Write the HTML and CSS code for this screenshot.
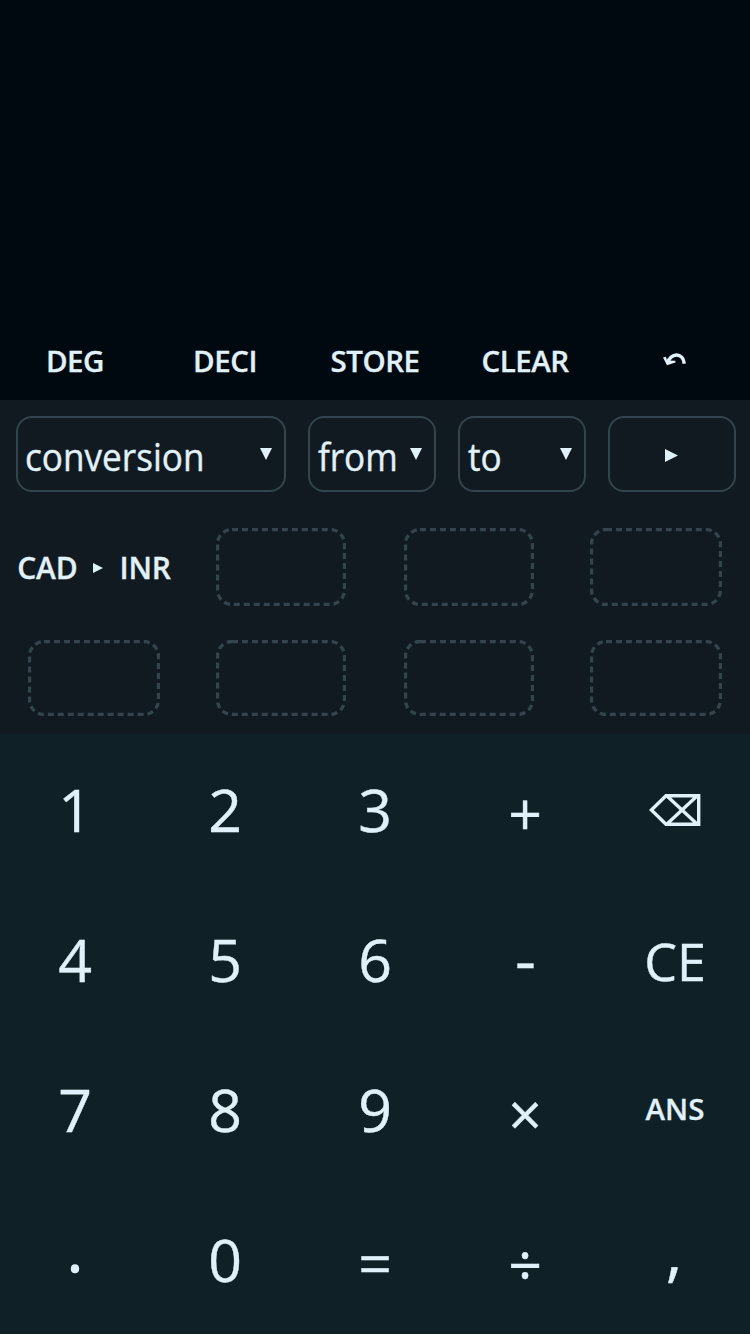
FILE: index.html
```
<!DOCTYPE html>
<html lang="en">
<head>
<meta charset="utf-8">
<title>Calculator</title>
<link rel="stylesheet" href="styles.css">
</head>
<body>
<main class="calculator">
  <section class="display"></section>
  <nav class="tools">
    <button class="tool">DEG</button>
    <button class="tool">DECI</button>
    <button class="tool">STORE</button>
    <button class="tool">CLEAR</button>
    <button class="tool" aria-label="Undo"><svg class="undo" width="24" height="14" viewBox="0 0 24 14"><path d="M5 9.5C6.5.3 20.8-1.6 21 10.8" fill="none" stroke="currentColor" stroke-width="3.4"/><path d="M0 4.6l2.8-.8 1.4 3.8 8.2.2v1.6L4 12.2z" fill="currentColor"/></svg></button>
  </nav>
  <section class="panel">
    <div class="selectors">
      <button class="select"><span class="select-label">conversion</span><svg class="caret" width="12" height="12" viewBox="0 0 12 12"><path d="M0 0h12L6 12z" fill="currentColor"/></svg></button>
      <button class="select"><span class="select-label short">from</span><svg class="caret" width="12" height="12" viewBox="0 0 12 12"><path d="M0 0h12L6 12z" fill="currentColor"/></svg></button>
      <button class="select"><span class="select-label short">to</span><svg class="caret" width="12" height="12" viewBox="0 0 12 12"><path d="M0 0h12L6 12z" fill="currentColor"/></svg></button>
      <button class="select go" aria-label="Convert"><svg width="13" height="13" viewBox="0 0 13 13"><path d="M0 0l13 6.5L0 13z" fill="currentColor"/></svg></button>
    </div>
    <div class="slots">
      <button class="saved"><span>CAD</span><svg class="arrow" width="10" height="10" viewBox="0 0 10 10"><path d="M0 0l10 5-10 5z" fill="currentColor"/></svg><span>INR</span></button>
      <svg class="slot" width="130" height="78"><rect x="1.5" y="1.5" width="127" height="75" rx="14.5"/></svg>
      <svg class="slot" width="130" height="78"><rect x="1.5" y="1.5" width="127" height="75" rx="14.5"/></svg>
      <svg class="slot" width="132" height="78"><rect x="1.5" y="1.5" width="129" height="75" rx="14.5"/></svg>
      <svg class="slot" width="132" height="76"><rect x="1.5" y="1.5" width="129" height="73" rx="14.5"/></svg>
      <svg class="slot" width="130" height="76"><rect x="1.5" y="1.5" width="127" height="73" rx="14.5"/></svg>
      <svg class="slot" width="130" height="76"><rect x="1.5" y="1.5" width="127" height="73" rx="14.5"/></svg>
      <svg class="slot" width="132" height="76"><rect x="1.5" y="1.5" width="129" height="73" rx="14.5"/></svg>
    </div>
  </section>
  <section class="keypad">
    <button class="key">1</button><button class="key">2</button><button class="key">3</button><button class="key op">+</button>
    <button class="key erase" aria-label="Backspace"><svg width="52" height="32" viewBox="0 0 52 32"><path d="M2.4 16L17 1.7h32.7v28.6H17zM18 2l30 28M18 30L48 2" fill="none" stroke="currentColor" stroke-width="3.4"/></svg></button>
    <button class="key">4</button><button class="key">5</button><button class="key">6</button><button class="key minus"><span>-</span></button><button class="key ce">CE</button>
    <button class="key">7</button><button class="key">8</button><button class="key">9</button><button class="key op">×</button><button class="key ans">ANS</button>
    <button class="key dot">.</button><button class="key">0</button><button class="key equals">=</button><button class="key op">÷</button><button class="key comma">,</button>
  </section>
</main>
</body>
</html>
```
FILE: styles.css
```
* { box-sizing: border-box; }
body {
  margin: 0;
  background: #000910;
  color: #e1f1f9;
  font-family: "Open Sans", "Noto Sans", sans-serif;
}
button {
  margin: 0;
  padding: 0;
  border: 0;
  background: none;
  color: inherit;
  font: inherit;
}
svg { display: block; flex: none; }
.calculator {
  display: grid;
  grid-template-rows: 324px 76px 334px 600px;
  width: 750px;
  height: 1334px;
  overflow: hidden;
}
.tools { display: grid; grid-template-columns: repeat(5, 150px); }
.tool {
  display: flex;
  align-items: center;
  justify-content: center;
  padding-bottom: 4px;
  font-size: 29.5px;
  font-weight: 600;
  letter-spacing: -0.5px;
  -webkit-text-stroke: 0.3px;
}
.undo { margin: 0 1px 1px 0; }
.panel { background: #121a21; padding: 16px 14px 0 16px; }
.selectors {
  display: grid;
  grid-template-columns: 270px 128px 128px 128px;
  column-gap: 22px;
  height: 76px;
}
.select {
  display: flex;
  align-items: center;
  justify-content: space-between;
  padding: 0 12px 0 7px;
  border: 2px solid #34444c;
  border-radius: 16px;
  font-size: 38px;
}
.select-label {
  padding-top: 3px;
  line-height: 50px;
  transform: scaleX(0.925);
  transform-origin: left;
  -webkit-text-stroke: 0.4px;
}
.short { padding-left: 1px; margin-right: -1px; }
.caret { margin-bottom: 1px; }
.go { justify-content: center; padding: 3px 2px 0 0; }
.slots {
  display: grid;
  grid-template-columns: 132px 132px 130px 132px;
  grid-template-rows: 78px 76px;
  column-gap: 56px;
  row-gap: 34px;
  padding: 36px 0 0 12px;
}
.slot {
  fill: none;
  stroke: #34444c;
  stroke-width: 3.3px;
  stroke-dasharray: 6 3.98;
}
.saved {
  display: flex;
  align-items: center;
  justify-content: center;
  gap: 16px;
  margin: 0 -14px;
  font-size: 30px;
  font-weight: 600;
  letter-spacing: -0.2px;
  -webkit-text-stroke: 0.3px;
}
.arrow { margin: 2px 1px 0 -1px; }
.keypad {
  display: grid;
  grid-template: repeat(4, 150px) / repeat(5, 150px);
  background: #0f2027;
}
.key {
  display: flex;
  align-items: center;
  justify-content: center;
  font-size: 59px;
  line-height: 80px;
  -webkit-text-stroke: 0.4px;
}
.erase { padding-top: 2px; }
.op { padding-top: 8px; }
.equals { padding-top: 6px; }
.minus { padding-top: 0; }
.minus span { transform: scaleX(1.1); }
.ce { padding-top: 4px; font-size: 52px; }
.ans { font-size: 29.5px; font-weight: 600; -webkit-text-stroke: 0.3px; }
.dot { padding: 0 0 20px; -webkit-text-stroke: 1.5px; }
.comma { padding: 0 2px 16px 0; font-size: 64px; }
```
